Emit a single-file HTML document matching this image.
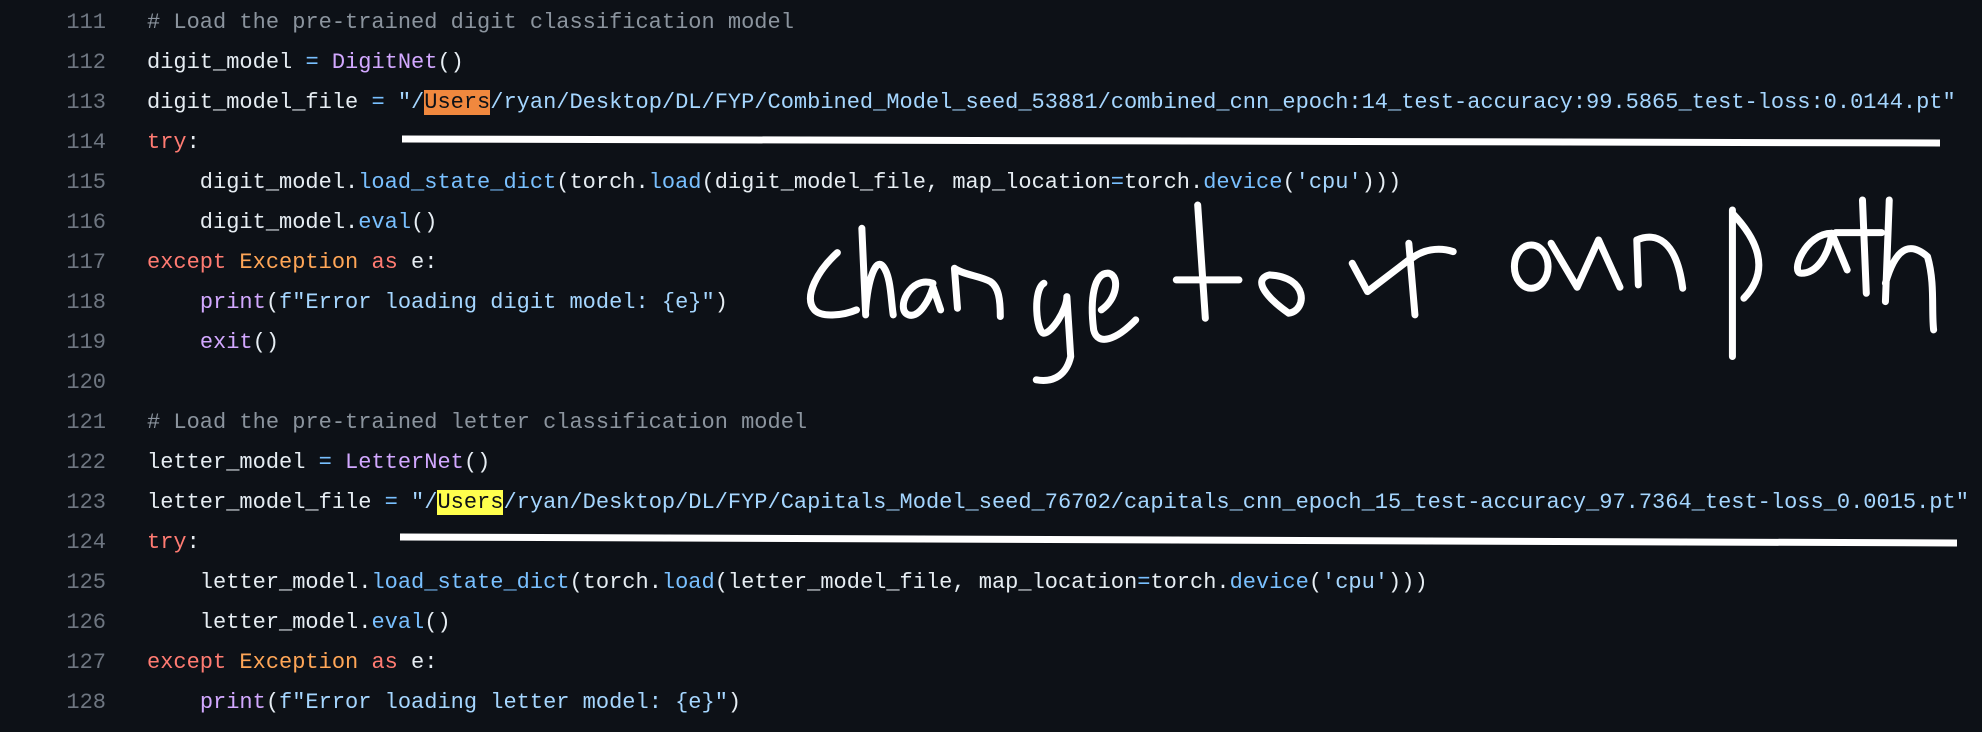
<!DOCTYPE html>
<html><head><meta charset="utf-8"><style>
html,body{margin:0;padding:0;background:#0d1117;width:1982px;height:732px;overflow:hidden}
.wrap{position:absolute;left:0;top:3px}
.l{height:40px;line-height:40px;white-space:pre;font-family:"Liberation Mono",monospace;font-size:22px;color:#e6edf3;position:relative}
.n{position:absolute;left:0;width:106px;text-align:right;color:#6e7681}
.c{position:absolute;left:147px}
.cm{color:#8b949e}.p{color:#d2a8ff}.s{color:#a5d6ff}.k{color:#ff7b72}.b{color:#79c0ff}.o{color:#ffa657}
.h1{background:#f0883e;color:#0d1117}.h2{background:#ffff4d;color:#0d1117}
svg{position:absolute;left:0;top:0}
</style></head><body>
<div class="wrap">
<div class="l"><span class="n">111</span><span class="c"><span class="cm"># Load the pre-trained digit classification model</span></span></div>
<div class="l"><span class="n">112</span><span class="c">digit_model <span class="b">=</span> <span class="p">DigitNet</span>()</span></div>
<div class="l"><span class="n">113</span><span class="c">digit_model_file <span class="b">=</span> <span class="s">"/<span class="h1">Users</span>/ryan/Desktop/DL/FYP/Combined_Model_seed_53881/combined_cnn_epoch:14_test-accuracy:99.5865_test-loss:0.0144.pt"</span></span></div>
<div class="l"><span class="n">114</span><span class="c"><span class="k">try</span>:</span></div>
<div class="l"><span class="n">115</span><span class="c">    digit_model.<span class="b">load_state_dict</span>(torch.<span class="b">load</span>(digit_model_file, map_location<span class="b">=</span>torch.<span class="b">device</span>(<span class="s">'cpu'</span>)))</span></div>
<div class="l"><span class="n">116</span><span class="c">    digit_model.<span class="b">eval</span>()</span></div>
<div class="l"><span class="n">117</span><span class="c"><span class="k">except</span> <span class="o">Exception</span> <span class="k">as</span> e:</span></div>
<div class="l"><span class="n">118</span><span class="c">    <span class="p">print</span>(<span class="s">f"Error loading digit model: {e}"</span>)</span></div>
<div class="l"><span class="n">119</span><span class="c">    <span class="p">exit</span>()</span></div>
<div class="l"><span class="n">120</span><span class="c"></span></div>
<div class="l"><span class="n">121</span><span class="c"><span class="cm"># Load the pre-trained letter classification model</span></span></div>
<div class="l"><span class="n">122</span><span class="c">letter_model <span class="b">=</span> <span class="p">LetterNet</span>()</span></div>
<div class="l"><span class="n">123</span><span class="c">letter_model_file <span class="b">=</span> <span class="s">"/<span class="h2">Users</span>/ryan/Desktop/DL/FYP/Capitals_Model_seed_76702/capitals_cnn_epoch_15_test-accuracy_97.7364_test-loss_0.0015.pt"</span></span></div>
<div class="l"><span class="n">124</span><span class="c"><span class="k">try</span>:</span></div>
<div class="l"><span class="n">125</span><span class="c">    letter_model.<span class="b">load_state_dict</span>(torch.<span class="b">load</span>(letter_model_file, map_location<span class="b">=</span>torch.<span class="b">device</span>(<span class="s">'cpu'</span>)))</span></div>
<div class="l"><span class="n">126</span><span class="c">    letter_model.<span class="b">eval</span>()</span></div>
<div class="l"><span class="n">127</span><span class="c"><span class="k">except</span> <span class="o">Exception</span> <span class="k">as</span> e:</span></div>
<div class="l"><span class="n">128</span><span class="c">    <span class="p">print</span>(<span class="s">f"Error loading letter model: {e}"</span>)</span></div>
</div>
<svg width="1982" height="732" viewBox="0 0 1982 732">
<line x1="402" y1="139" x2="1940" y2="143" stroke="#fff" stroke-width="7"/>
<line x1="400" y1="537" x2="1957" y2="543" stroke="#fff" stroke-width="7"/>
<g transform="translate(780,200) scale(0.765,0.333)" fill="none" stroke="#fff" stroke-width="7" stroke-linecap="round" stroke-linejoin="round">
<g vector-effect="non-scaling-stroke">
<path vector-effect="non-scaling-stroke" d="M75,158 C50,210 30,290 45,330 C55,355 85,345 100,330"/>
<path vector-effect="non-scaling-stroke" d="M107,85 L112,345 M112,330 C115,240 125,170 135,200 C145,230 145,300 148,345"/>
<path vector-effect="non-scaling-stroke" d="M200,250 C170,225 150,330 168,345 C182,355 195,300 200,262 L210,330"/>
<path vector-effect="non-scaling-stroke" d="M232,325 L228,205 C240,225 262,228 275,245 C286,262 288,300 288,350"/>
<path vector-effect="non-scaling-stroke" d="M345,250 C330,270 335,400 345,400 C355,400 375,330 375,290 L380,470 C375,520 360,550 335,540"/>
<path vector-effect="non-scaling-stroke" d="M420,330 C440,300 445,230 430,220 C410,215 405,300 410,390 C415,440 440,420 465,360"/>
<path vector-effect="non-scaling-stroke" d="M546,15 L556,355 M518,240 L600,240"/>
<path vector-effect="non-scaling-stroke" d="M640,225 C615,240 640,300 665,340 C690,330 690,230 640,225 Z"/>
<path vector-effect="non-scaling-stroke" d="M748,190 L768,275 L822,180 M822,130 L830,345 M826,175 C840,150 860,140 880,155"/>
<ellipse vector-effect="non-scaling-stroke" cx="982" cy="200" rx="22" ry="65"/>
<path vector-effect="non-scaling-stroke" d="M1008,130 L1042,262 L1070,120 L1098,262 M1122,255 L1120,120 C1145,95 1172,120 1180,265"/>
<path vector-effect="non-scaling-stroke" d="M1245,30 L1245,470 M1245,40 C1270,100 1300,200 1260,295"/>
<path vector-effect="non-scaling-stroke" d="M1375,100 C1340,100 1320,220 1335,220 C1355,220 1370,170 1375,100 L1395,210"/>
<path vector-effect="non-scaling-stroke" d="M1415,0 L1420,280 M1380,98 L1440,98"/>
<path vector-effect="non-scaling-stroke" d="M1450,0 L1445,305 M1445,250 C1460,130 1480,130 1500,170 C1510,250 1505,330 1508,390"/>
</g>
</g>
</svg>
</body></html>
